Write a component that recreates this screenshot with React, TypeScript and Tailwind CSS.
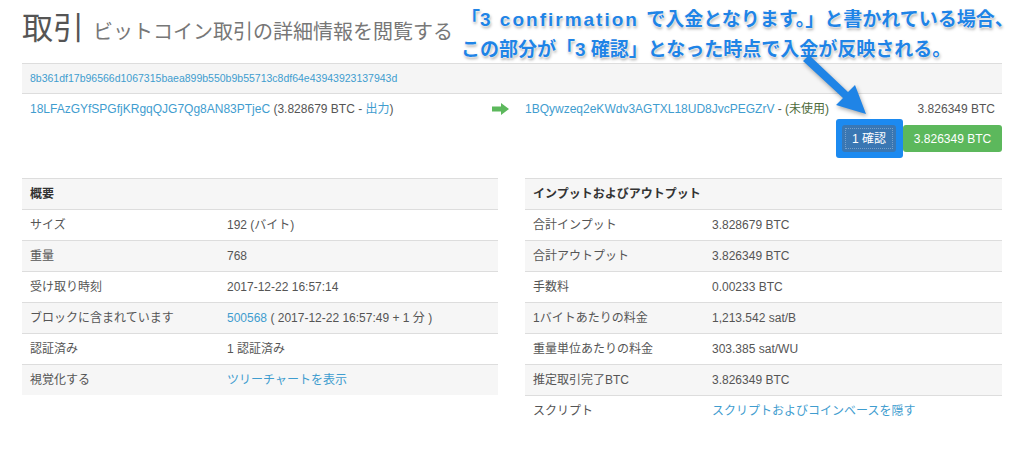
const font = "font-['Liberation_Sans','Noto_Sans_CJK_JP',sans-serif]";
const link = "text-[#3f9dcf]";

const summary: [string, React.ReactNode][] = [
  ["サイズ", "192 (バイト)"],
  ["重量", "768"],
  ["受け取り時刻", "2017-12-22 16:57:14"],
  [
    "ブロックに含まれています",
    <>
      <span className={link}>500568</span> ( 2017-12-22 16:57:49 + 1 分 )
    </>,
  ],
  ["認証済み", "1 認証済み"],
  ["視覚化する", <span className={link}>ツリーチャートを表示</span>],
];

const io: [string, React.ReactNode][] = [
  ["合計インプット", "3.828679 BTC"],
  ["合計アウトプット", "3.826349 BTC"],
  ["手数料", "0.00233 BTC"],
  ["1バイトあたりの料金", "1,213.542 sat/B"],
  ["重量単位あたりの料金", "303.385 sat/WU"],
  ["推定取引完了BTC", "3.826349 BTC"],
  ["スクリプト", <span className={link}>スクリプトおよびコインベースを隠す</span>],
];

function Table({
  title,
  rows,
  valueCol,
}: {
  title: string;
  rows: [string, React.ReactNode][];
  valueCol: string;
}) {
  return (
    <div className="text-[12px] text-[#555]">
      <div className="flex h-[31px] items-center border-t border-[#dddddd] bg-[#f6f6f6] px-[8px] font-bold text-[#333]">
        {title}
      </div>
      {rows.map(([label, value], i) => (
        <div
          key={label}
          className={`grid h-[31px] items-center border-t border-[#dddddd] px-[8px] ${valueCol} ${
            i % 2 === 1 ? "bg-[#f6f6f6]" : "bg-white"
          }`}
        >
          <span>{label}</span>
          <span>{value}</span>
        </div>
      ))}
    </div>
  );
}

export default function App() {
  return (
    <div className={`relative h-[451px] w-[1024px] overflow-hidden bg-white ${font}`}>
      <div className="w-[1002px] pl-[22px]">
        {/* Page title */}
        <div className="flex h-[63px] items-baseline gap-[9px] pt-[9px]">
          <h1 className="text-[31px] leading-[40px] text-[#555]">取引</h1>
          <span className="text-[20px] text-[#777]">ビットコイン取引の詳細情報を閲覧する</span>
        </div>

        {/* Hash */}
        <div className={`flex h-[30px] items-center border-t border-[#dddddd] bg-[#f5f5f5] px-[8px] text-[10.5px] ${link}`}>
          8b361df17b96566d1067315baea899b550b9b55713c8df64e43943923137943d
        </div>

        {/* Input -> output */}
        <div className="grid h-[31px] grid-cols-[453px_50px_1fr] items-center border-t border-[#dddddd] text-[12px] text-[#555]">
          <div className="pl-[8px]">
            <span className={link}>18LFAzGYfSPGfjKRgqQJG7Qg8AN83PTjeC</span> (3.828679 BTC -{" "}
            <span className={link}>出力</span>)
          </div>
          <div className="flex justify-center">
            <svg width="17" height="12" viewBox="0 0 17 12">
              <path d="M0 3.5h9V0l8 6-8 6V8.5H0z" fill="#5cb85c" />
            </svg>
          </div>
          <div className="flex items-center justify-between pr-[7px]">
            <span>
              <span className={link}>1BQywzeq2eKWdv3AGTXL18UD8JvcPEGZrV</span> -{" "}
              <span className="text-[#4e6b3c]">(未使用)</span>
            </span>
            <span>3.826349 BTC</span>
          </div>
        </div>

        <div className="flex justify-end pt-[1px] text-[12px] text-white">
          <div className="relative mr-[7px]">
            <div className="absolute -bottom-[6px] -left-[6px] -right-[7px] -top-[6px] rounded-[3px] bg-[#1c8af0]" />
            <button className="relative h-[27px] w-[54px] rounded-[3px] bg-[#3a77b3] outline-1 -outline-offset-4 outline-dotted outline-white/30">
              1 確認
            </button>
          </div>
          <span className="flex h-[27px] w-[99px] items-center justify-center rounded-[3px] bg-[#5cb85c]">
            3.826349 BTC
          </span>
        </div>

        <div className="mt-[26px] grid grid-cols-[476px_477px] gap-[27px]">
          <Table title="概要" rows={summary} valueCol="grid-cols-[197px_1fr]" />
          <Table title="インプットおよびアウトプット" rows={io} valueCol="grid-cols-[179px_1fr]" />
        </div>
      </div>

      {/* Annotation overlay */}
      <div className="absolute left-[461px] top-[5px] text-[19px] font-bold leading-[30px] text-[#1f84e6] [text-shadow:0_0_2px_#fff,0_0_2px_#fff,1px_2px_3px_rgba(0,0,0,0.35)]">
        <div>
          「<span className="tracking-[2px]">3 confirmation </span>で入金となります。」と書かれている場合、
        </div>
        <div>この部分が「3 確認」となった時点で入金が反映される。</div>
      </div>
      <svg
        className="absolute left-[790px] top-[50px] drop-shadow-[1px_2px_2px_rgba(0,0,0,0.35)]"
        width="90"
        height="75"
        viewBox="0 0 90 75"
      >
        <polygon points="19,5 58,42 65,35 76,64 46,55 53,48 13,11" fill="#1f84e6" />
      </svg>
    </div>
  );
}
